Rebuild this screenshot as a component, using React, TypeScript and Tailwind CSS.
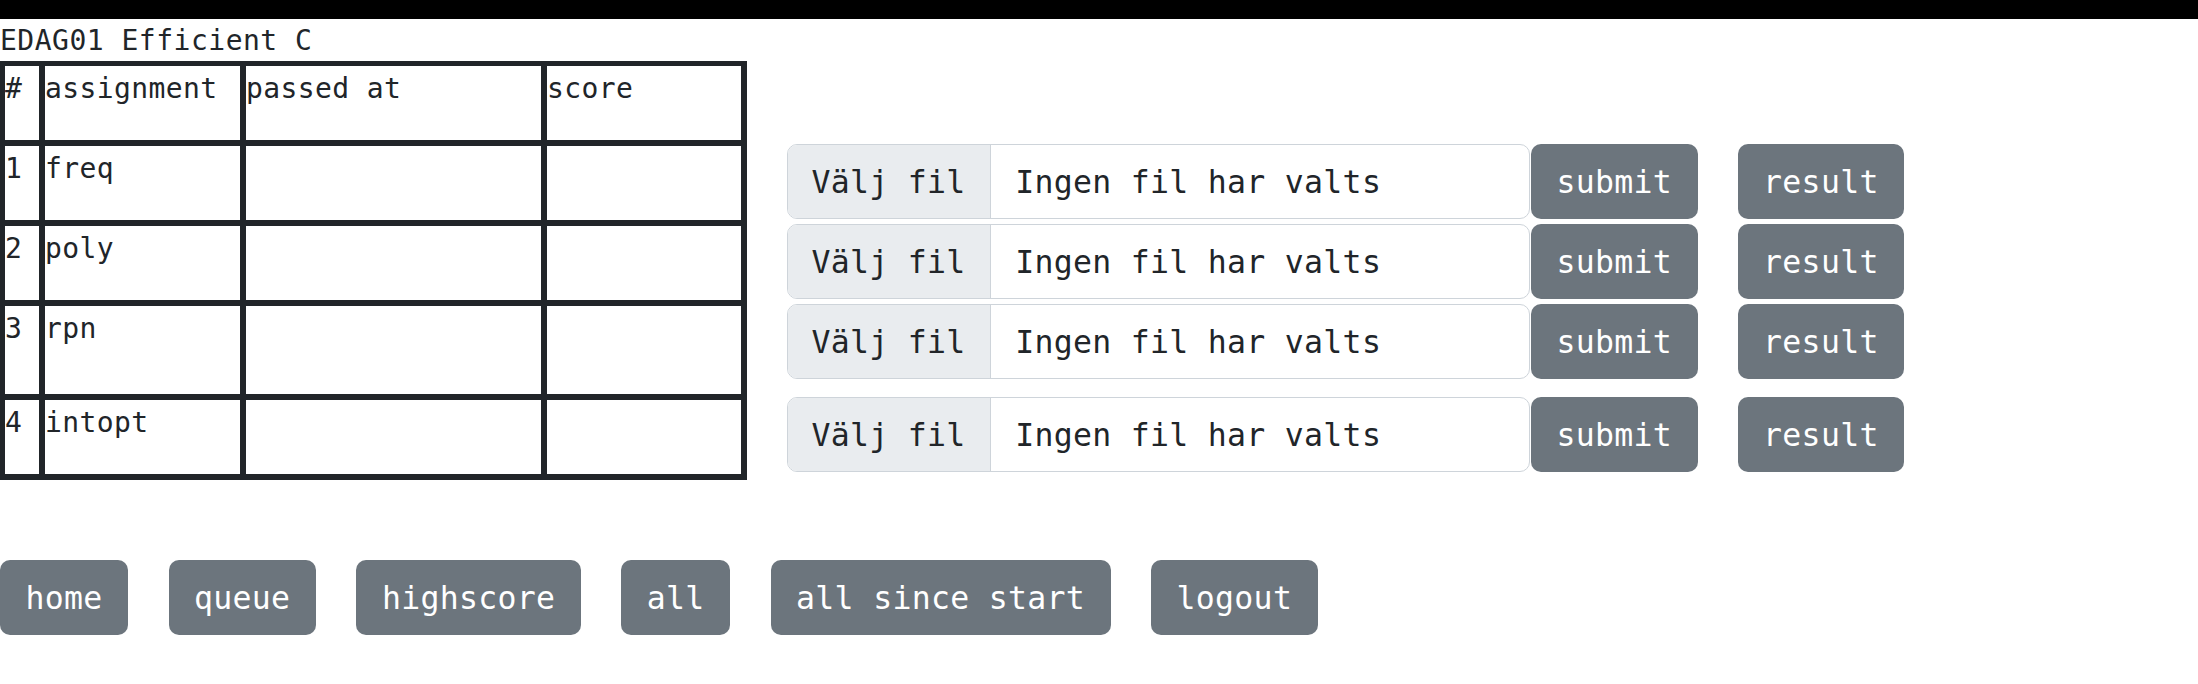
import React from "react";

const rows = [
  { n: "1", a: "freq", h: "h-[80px]" },
  { n: "2", a: "poly", h: "h-[80px]" },
  { n: "3", a: "rpn", h: "h-[94px]" },
  { n: "4", a: "intopt", h: "h-[80px]" },
];

const cell = "border-r-[6px] border-b-[6px] border-[#212529] leading-[42px] pt-[2px]";

function FileRow({ mb }: { mb: string }) {
  return (
    <div className={`flex h-[75px] items-stretch ${mb}`}>
      <div className="flex w-[743.5px] items-stretch overflow-hidden rounded-[10px] border border-[#ced4da] bg-white">
        <span className="flex items-center border-r border-[#ced4da] bg-[#e9ecef] px-[24px] pt-[2px]">Välj fil</span>
        <span className="flex items-center pl-[24.5px] pt-[2px]">Ingen fil har valts</span>
      </div>
      <button className="ml-[1px] flex items-center rounded-[10px] bg-[#6c757d] px-[25.5px] pt-[2px] text-white">submit</button>
      <button className="ml-[40px] flex items-center rounded-[10px] bg-[#6c757d] px-[25.5px] pt-[2px] text-white">result</button>
    </div>
  );
}

export default function App() {
  const nav = ["home", "queue", "highscore", "all", "all since start", "logout"];
  return (
    <div className="min-h-[684px] w-[2198px] bg-white font-['DejaVu_Sans_Mono',monospace] text-[#212529]">
      <div className="h-[19px] w-full bg-black" />
      <div className="flex items-start gap-[39.5px]">
        <div className="flex flex-col">
          <div className="h-[42px] pt-[1px] text-[28px] leading-[42px] tracking-[0.5px]">EDAG01 Efficient C</div>
          <div className="grid w-[747px] grid-cols-[40px_201px_301px_200px] border-l-[5px] border-t-[5px] border-[#212529] text-[28px] tracking-[0.4px]">
            <div className={`${cell} h-[80px]`}>#</div>
            <div className={`${cell} h-[80px]`}>assignment</div>
            <div className={`${cell} h-[80px]`}>passed at</div>
            <div className={`${cell} h-[80px]`}>score</div>
            {rows.map((r) => (
              <React.Fragment key={r.n}>
                <div className={`${cell} ${r.h}`}>{r.n}</div>
                <div className={`${cell} ${r.h}`}>{r.a}</div>
                <div className={`${cell} ${r.h}`}></div>
                <div className={`${cell} ${r.h}`}></div>
              </React.Fragment>
            ))}
          </div>
        </div>
        <div className="flex flex-col pt-[125px] text-[31.5px] leading-[47px] tracking-[0.3px]">
          <FileRow mb="mb-[5px]" />
          <FileRow mb="mb-[5px]" />
          <FileRow mb="mb-[18px]" />
          <FileRow mb="" />
        </div>
      </div>
      <div className="mt-[80px] flex gap-[40.5px] text-[31.5px] leading-[47px] tracking-[0.3px]">
        {nav.map((t) => (
          <button key={t} className="flex h-[75px] items-center rounded-[10px] bg-[#6c757d] px-[25.5px] pt-[2px] text-white">
            {t}
          </button>
        ))}
      </div>
    </div>
  );
}
